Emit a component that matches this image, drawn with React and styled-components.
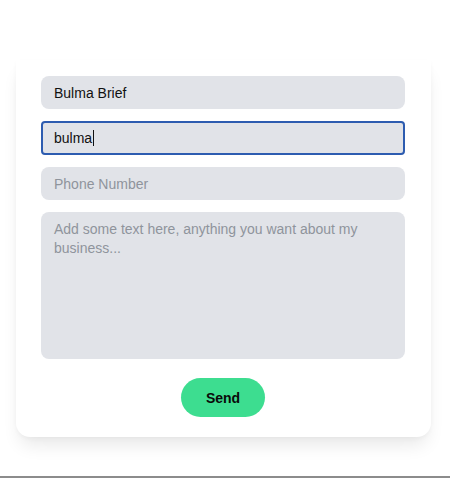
import React from 'react';
import styled, { createGlobalStyle } from 'styled-components';

const GlobalStyle = createGlobalStyle`
  html, body {
    margin: 0;
    padding: 0;
    background: #ffffff;
    font-family: "Liberation Sans", Arial, sans-serif;
  }
`;

const Page = styled.div`
  height: 478px;
  border-bottom: 2px solid #8c8c8c;
  padding-top: 60px;
  box-sizing: border-box;
  overflow: hidden;
`;

const Card = styled.form`
  width: 415px;
  margin-left: 16px;
  box-sizing: border-box;
  padding: 16px 26px 20px 25px;
  background: #ffffff;
  border-radius: 0 0 14px 14px;
  box-shadow: 0 12px 18px -4px rgba(0, 0, 0, 0.09), 0 2px 4px rgba(0, 0, 0, 0.03);
  display: flex;
  flex-direction: column;
  gap: 12px;
`;

const Field = styled.div`
  height: ${p => (p.$focused ? '34px' : '33px')};
  box-sizing: border-box;
  display: flex;
  align-items: center;
  padding: 0 ${p => (p.$focused ? '11px' : '13px')};
  background: #e1e3e8;
  border-radius: ${p => (p.$focused ? '4px' : '8px')};
  border: ${p => (p.$focused ? '2px solid #2d5cb0' : 'none')};
  font-size: 14px;
  color: ${p => (p.$placeholder ? '#8f949c' : '#111111')};
`;

const Caret = styled.span`
  display: inline-block;
  width: 1px;
  height: 16px;
  background: #111111;
  margin-left: 1px;
`;

const TextArea = styled.div`
  height: 147px;
  box-sizing: border-box;
  padding: 8px 13px;
  background: #e1e3e8;
  border-radius: 8px;
  font-size: 14px;
  line-height: 19px;
  color: #8f949c;
`;

const Actions = styled.div`
  display: flex;
  justify-content: center;
  margin-top: 7px;
`;

const SendButton = styled.button`
  width: 84px;
  height: 39px;
  border: none;
  border-radius: 20px;
  background: #3ddd90;
  color: #0a0a0a;
  font-family: "Liberation Sans", Arial, sans-serif;
  font-weight: 700;
  font-size: 14px;
  cursor: pointer;
`;

export default function App() {
  return (
    <>
      <GlobalStyle />
      <Page>
        <Card onSubmit={e => e.preventDefault()}>
          <Field>Bulma Brief</Field>
          <Field $focused>
            bulma<Caret />
          </Field>
          <Field $placeholder>Phone Number</Field>
          <TextArea>Add some text here, anything you want about my business...</TextArea>
          <Actions>
            <SendButton type="submit">Send</SendButton>
          </Actions>
        </Card>
      </Page>
    </>
  );
}
